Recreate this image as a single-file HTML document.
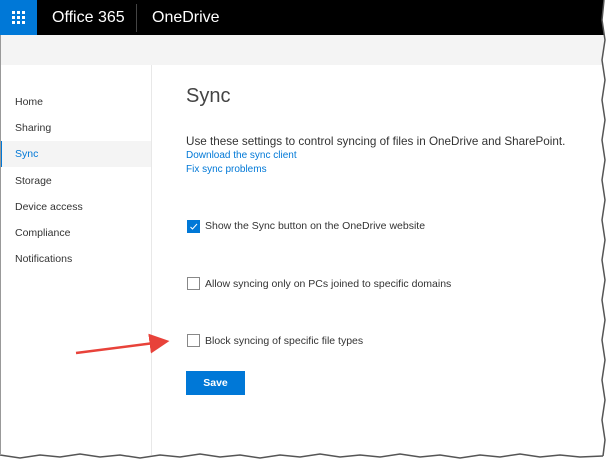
<!DOCTYPE html>
<html><head><style>
body{margin:0;width:615px;height:469px;background:#fff;position:relative;overflow:hidden;font-family:"Liberation Sans",sans-serif;}
.hdr{position:absolute;left:0;top:0;width:604px;height:35px;background:#000;}
.waf{position:absolute;left:0;top:0;width:37px;height:35px;background:#0078d7;}
.t{position:absolute;color:#fff;font-size:16px;top:9px;font-weight:300;}
.sep{position:absolute;left:136px;top:4px;width:1px;height:28px;background:#444;}
.gray{position:absolute;left:0;top:35px;width:604px;height:30px;background:#f4f4f4;}
.side{position:absolute;left:151px;top:65px;width:1px;height:390px;background:#e8e8e8;}
.nav{position:absolute;left:15px;font-size:10.5px;color:#333;}
.sel{position:absolute;left:0;top:141px;width:151px;height:26px;background:#f4f4f4;border-left:2px solid #0078d7;box-sizing:border-box;}
.txt{position:absolute;font-size:10.5px;color:#333;white-space:nowrap;}
.lnk{position:absolute;font-size:10px;color:#0078d7;}
.cb{position:absolute;left:187px;width:13px;height:13px;border:1px solid #888;box-sizing:border-box;background:#fff;}
</style></head><body>
<div class="hdr"></div>
<div class="waf"><svg width="37" height="35"><g fill="#fff">
<rect x="12" y="11" width="3" height="3"/><rect x="17" y="11" width="3" height="3"/><rect x="22" y="11" width="3" height="3"/>
<rect x="12" y="16" width="3" height="3"/><rect x="17" y="16" width="3" height="3"/><rect x="22" y="16" width="3" height="3"/>
<rect x="12" y="21" width="3" height="3"/><rect x="17" y="21" width="3" height="3"/><rect x="22" y="21" width="3" height="3"/></g></svg></div>
<div class="t" style="left:52px">Office 365</div>
<div class="sep"></div>
<div class="t" style="left:152px">OneDrive</div>
<div class="gray"></div>
<div class="side"></div>
<div class="sel"></div>
<div class="nav" style="top:96px">Home</div>
<div class="nav" style="top:122px">Sharing</div>
<div class="nav" style="top:148px;color:#0078d7">Sync</div>
<div class="nav" style="top:175px">Storage</div>
<div class="nav" style="top:201px">Device access</div>
<div class="nav" style="top:227px">Compliance</div>
<div class="nav" style="top:253px">Notifications</div>
<div class="txt" style="left:186px;top:85px;font-size:20px;color:#444;font-weight:300">Sync</div>
<div class="txt" style="left:186px;top:135px;font-size:11.7px">Use these settings to control syncing of files in OneDrive and SharePoint.</div>
<div class="lnk" style="left:186px;top:150px">Download the sync client</div>
<div class="lnk" style="left:186px;top:164px">Fix sync problems</div>
<div class="cb" style="top:220px;background:#0078d7;border-color:#0078d7"><svg width="13" height="13" style="position:absolute;left:-1px;top:-1px"><path d="M3.5 7 L5.5 9 L10 4" stroke="#fff" fill="none" stroke-width="1"/></svg></div>
<div class="txt" style="left:205px;top:220px">Show the Sync button on the OneDrive website</div>
<div class="cb" style="top:277px"></div>
<div class="txt" style="left:205px;top:278px">Allow syncing only on PCs joined to specific domains</div>
<div class="cb" style="top:334px"></div>
<div class="txt" style="left:205px;top:335px">Block syncing of specific file types</div>
<div style="position:absolute;left:186px;top:371px;width:59px;height:24px;background:#0078d7;color:#fff;font-size:10.5px;font-weight:bold;text-align:center;line-height:24px">Save</div>
<svg style="position:absolute;left:0;top:0" width="615" height="469">
<defs><marker id="a" markerWidth="8" markerHeight="8" refX="5" refY="4" orient="auto"><path d="M0 0 L8 4 L0 8 z" fill="#e8423a"/></marker></defs>
<line x1="76" y1="353" x2="162" y2="342" stroke="#e8423a" stroke-width="2.5" marker-end="url(#a)"/>
<polygon points="604,0 615,0 615,469 0,469 0,455 20,458 40,455 60,457 80,454 100,457 120,455 140,458 160,455 180,457 200,454 220,457 240,455 260,458 280,455 300,457 320,454 340,457 360,455 380,457 400,454 420,457 440,455 460,458 480,455 500,457 520,454 540,457 560,455 580,457 603,456 605,440 602,420 605,400 602,380 605,360 602,340 605,320 602,300 605,280 602,260 605,240 602,220 605,200 602,180 605,160 602,140 605,120 602,100 605,80 602,60 605,40 602,20" fill="#fff"/>
<polyline points="604,0 602,20 605,40 602,60 605,80 602,100 605,120 602,140 605,160 602,180 605,200 602,220 605,240 602,260 605,280 602,300 605,320 602,340 605,360 602,380 605,400 602,420 605,440 603,456" fill="none" stroke="#555" stroke-width="1.5"/>
<polyline points="0,455 20,458 40,455 60,457 80,454 100,457 120,455 140,458 160,455 180,457 200,454 220,457 240,455 260,458 280,455 300,457 320,454 340,457 360,455 380,457 400,454 420,457 440,455 460,458 480,455 500,457 520,454 540,457 560,455 580,457 603,456" fill="none" stroke="#555" stroke-width="1.5"/>
<line x1="0.5" y1="35" x2="0.5" y2="455" stroke="#999" stroke-width="1"/>
</svg>
</body></html>
